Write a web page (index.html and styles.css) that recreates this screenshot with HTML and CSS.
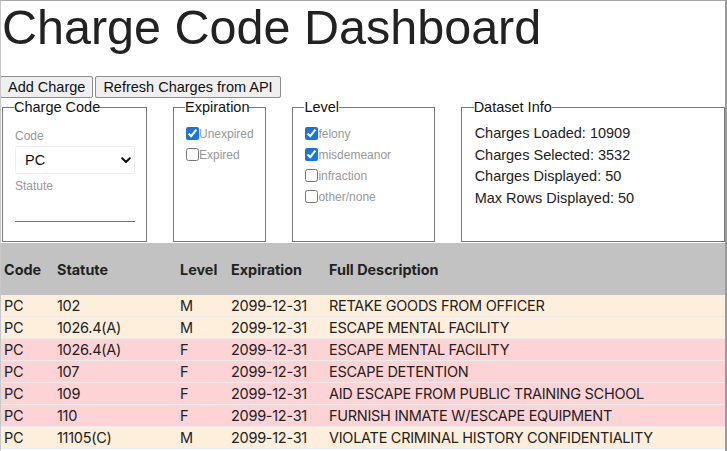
FILE: index.html
```html
<!DOCTYPE html>
<html>
<head>
<meta charset="utf-8">
<link rel="stylesheet" href="styles.css">
</head>
<body>
<div class="frame">
  <h1 class="title">Charge Code Dashboard</h1>
  <div class="actions">
    <button class="btn">Add Charge</button><button class="btn">Refresh Charges from API</button>
  </div>
  <div class="filters">
    <fieldset class="box box-code">
      <legend>Charge Code</legend>
      <label class="field-label">Code</label>
      <div class="select-wrap">
        <select class="select"><option>PC</option></select>
        <svg class="chevron" width="10" height="7" viewBox="0 0 10 7"><path d="M1.2 1.3 L5 5 L8.8 1.3" fill="none" stroke="#111" stroke-width="2" stroke-linecap="round" stroke-linejoin="round"/></svg>
      </div>
      <label class="field-label field-label-2">Statute</label>
      <input class="text-input" type="text">
    </fieldset>
    <fieldset class="box box-exp">
      <legend>Expiration</legend>
      <label class="check"><input type="checkbox" checked>Unexpired</label>
      <label class="check"><input type="checkbox">Expired</label>
    </fieldset>
    <fieldset class="box box-level">
      <legend>Level</legend>
      <label class="check"><input type="checkbox" checked>felony</label>
      <label class="check"><input type="checkbox" checked>misdemeanor</label>
      <label class="check"><input type="checkbox">infraction</label>
      <label class="check"><input type="checkbox">other/none</label>
    </fieldset>
    <fieldset class="box box-info">
      <legend>Dataset Info</legend>
      <div class="info">Charges Loaded: 10909</div>
      <div class="info">Charges Selected: 3532</div>
      <div class="info">Charges Displayed: 50</div>
      <div class="info">Max Rows Displayed: 50</div>
    </fieldset>
  </div>
  <table class="charges">
    <colgroup><col class="c1"><col class="c2"><col class="c3"><col class="c4"><col></colgroup>
    <thead>
      <tr><th>Code</th><th>Statute</th><th>Level</th><th>Expiration</th><th>Full Description</th></tr>
    </thead>
    <tbody>
      <tr class="m"><td>PC</td><td>102</td><td>M</td><td>2099-12-31</td><td>RETAKE GOODS FROM OFFICER</td></tr>
      <tr class="m"><td>PC</td><td>1026.4(A)</td><td>M</td><td>2099-12-31</td><td>ESCAPE MENTAL FACILITY</td></tr>
      <tr class="f"><td>PC</td><td>1026.4(A)</td><td>F</td><td>2099-12-31</td><td>ESCAPE MENTAL FACILITY</td></tr>
      <tr class="f"><td>PC</td><td>107</td><td>F</td><td>2099-12-31</td><td>ESCAPE DETENTION</td></tr>
      <tr class="f"><td>PC</td><td>109</td><td>F</td><td>2099-12-31</td><td>AID ESCAPE FROM PUBLIC TRAINING SCHOOL</td></tr>
      <tr class="f"><td>PC</td><td>110</td><td>F</td><td>2099-12-31</td><td>FURNISH INMATE W/ESCAPE EQUIPMENT</td></tr>
      <tr class="m"><td>PC</td><td>11105(C)</td><td>M</td><td>2099-12-31</td><td>VIOLATE CRIMINAL HISTORY CONFIDENTIALITY</td></tr>
    </tbody>
  </table>
</div>
</body>
</html>
```
FILE: styles.css
```css
html, body {
  margin: 0;
  padding: 0;
  background: #fff;
}
body {
  font-family: "Liberation Sans", Arial, sans-serif;
  color: #222;
}
.frame {
  width: 724px;
  height: 450px;
  border-top: 1px solid #a8a8a8;
  border-left: 1px solid #c8c8c8;
  border-right: 2px solid #9a9a9a;
  overflow: hidden;
}
.title {
  margin: -1px 0 22px 1px;
  font-size: 48.5px;
  font-weight: normal;
  line-height: 54px;
  color: #222;
}
.actions {
  display: flex;
  gap: 2px;
  margin-left: -1px;
}
.btn {
  font-family: "Liberation Sans", Arial, sans-serif;
  font-size: 14.5px;
  color: #111;
  background: #efefef;
  border: 1px solid #8f8f8f;
  border-radius: 2px;
  height: 22px;
  padding: 0 7px;
  margin: 0;
}
.filters {
  display: flex;
  gap: 26px;
  margin: 1px 0 0 1px;
  height: 144px;
}
.box {
  margin: 0;
  border: 1px solid #7a7a7a;
  padding: 3px 11px 4px 12px;
  box-sizing: border-box;
  height: 143px;
  display: flex;
  flex-direction: column;
}
.box legend {
  font-size: 14.5px;
  color: #111;
  padding: 0;
  margin-left: -1px;
}
.box-code { width: 145px; }
.box-exp { width: 95px; }
.box-level { width: 145px; }
.box-info { width: 270px; padding-left: 13px; }
.field-label {
  font-size: 12px;
  color: #999;
  margin-top: 11px;
  line-height: 14px;
  flex: none;
}
.field-label-2 { margin-top: 5px; }
.select-wrap {
  position: relative;
  margin-top: 3px;
  width: 120px;
  flex: none;
}
.select {
  appearance: none;
  -webkit-appearance: none;
  width: 120px;
  height: 28px;
  border: 1px solid #ececec;
  border-radius: 3px;
  background: #fff;
  font-family: "Liberation Sans", Arial, sans-serif;
  font-size: 14.5px;
  color: #111;
  padding: 0 0 0 9px;
  margin: 0;
}
.chevron {
  position: absolute;
  right: 4px;
  top: 11px;
}
.text-input {
  flex: none;
  width: 120px;
  height: 20px;
  border: none;
  border-bottom: 1px solid #777;
  padding: 0;
  margin: 8px 0 0 0;
  outline: none;
  background: transparent;
}
.check {
  display: flex;
  align-items: center;
  font-size: 12px;
  color: #999;
  height: 21px;
  flex: none;
}
.box-exp .check:first-of-type,
.box-level .check:first-of-type { margin-top: 5px; }
.check input {
  width: 13px;
  height: 13px;
  margin: 0;
  accent-color: #1a73e8;
}
.info {
  font-size: 14.5px;
  color: #222;
  line-height: 21.5px;
}
.info:first-of-type { margin-top: 5px; }
.charges {
  width: 727px;
  margin: 0 0 0 -1px;
  border-collapse: collapse;
  table-layout: fixed;
  font-family: Inter, "Liberation Sans", sans-serif;
  font-size: 14.5px;
  color: #222;
}
.c1 { width: 53px; }
.c2 { width: 123px; }
.c3 { width: 51px; }
.c4 { width: 98px; }
.charges th {
  background: #c2c2c2;
  text-align: left;
  font-weight: bold;
  font-size: 14.4px;
  height: 52px;
  padding: 0 0 0 4px;
  color: #222;
}
.charges td {
  height: 21px;
  padding: 0 0 0 4px;
  white-space: nowrap;
  overflow: hidden;
  letter-spacing: -0.28px;
  border-bottom: 1px solid rgba(0,0,0,0.08);
}
.charges tr.m td { background: #feefdc; }
.charges tr.f td { background: #fdd3d6; }
```
